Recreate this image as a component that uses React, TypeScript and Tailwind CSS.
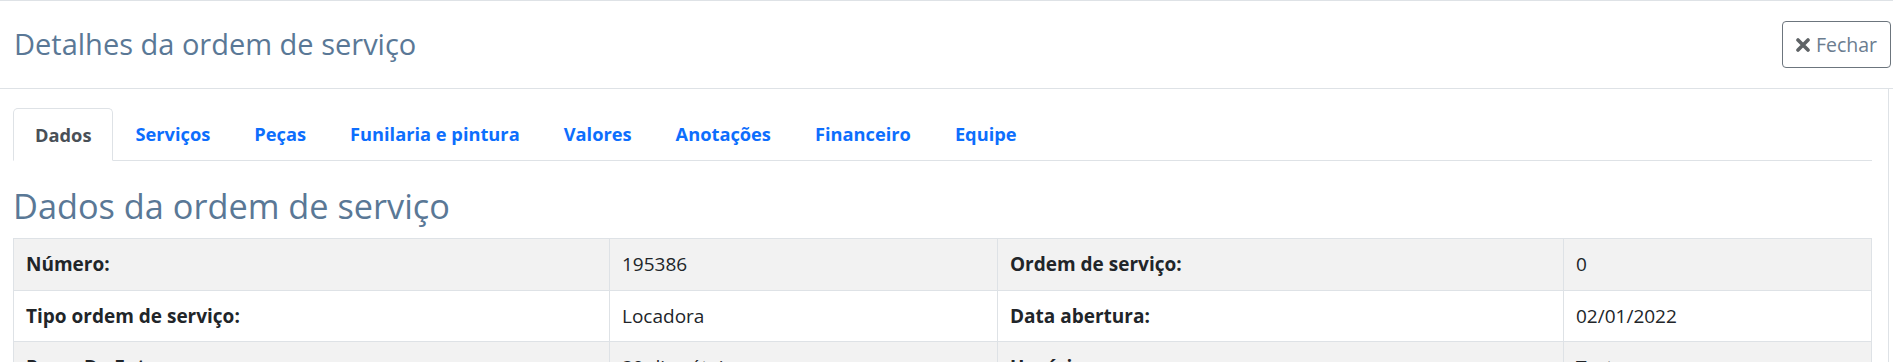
import React from "react";

const tabs = ["Dados", "Serviços", "Peças", "Funilaria e pintura", "Valores", "Anotações", "Financeiro", "Equipe"];

const rows: [string, string, string, string][] = [
  ["Número:", "195386", "Ordem de serviço:", "0"],
  ["Tipo ordem de serviço:", "Locadora", "Data abertura:", "02/01/2022"],
  ["Prazo De Entrega:", "30 dias úteis", "Usuário:", "Teste"],
];

const rowH = ["h-[52px]", "h-[51px]", "h-[51px]"];

export default function App() {
  return (
    <div
      className="w-[1893px] h-[362px] overflow-hidden bg-white border-t border-[#dee2e6] text-[#212529]"
      style={{ fontFamily: '"Open Sans", "Noto Sans", sans-serif' }}
    >
      <div className="h-[88px] flex items-center justify-between pl-[14px] pr-[2px] border-b border-[#dee2e6]">
        <h4 className="text-[29px] leading-[1.2] text-[#5a7896] font-normal">Detalhes da ordem de serviço</h4>
        <button className="h-[47px] w-[109px] flex items-center justify-center gap-[6px] border border-[#6c757d] rounded-[4px] text-[19.5px] text-[#6b7d8f]">
          <svg width="14" height="14" viewBox="0 0 14 14" className="mt-[1px]">
            <path d="M2 2 L12 12 M12 2 L2 12" stroke="#5f6366" strokeWidth="3.6" strokeLinecap="round" />
          </svg>
          <span>Fechar</span>
        </button>
      </div>
      <div className="mr-[4px] border-r border-[#dee2e6] h-[274px]">
        <div className="pl-[13px] pr-[16px] pt-[19px]">
          <div className="flex border-b border-[#dee2e6] h-[53px]">
            {tabs.map((t, i) => (
              <div
                key={t}
                className={
                  i === 0
                    ? "px-[21px] flex items-center text-[18.25px] font-bold text-[#495057] border border-[#dee2e6] border-b-white rounded-t-[5px] -mb-[1px] bg-white"
                    : "px-[21px] flex items-center text-[18.25px] font-bold text-[#0d6efd] border border-transparent"
                }
              >
                {t}
              </div>
            ))}
          </div>
          <h3 className="text-[34.3px] leading-[1.2] text-[#5a7896] font-normal mt-[24px] mb-[12px]">Dados da ordem de serviço</h3>
          <div className="grid grid-cols-[596px_388px_566px_308px] border-l border-t border-[#dee2e6] text-[19px]">
            {rows.map((r, ri) =>
              r.map((c, ci) => (
                <div
                  key={ri + "-" + ci}
                  className={
                    (ri % 2 === 0 ? "bg-[#f2f2f2] " : "bg-white ") +
                    rowH[ri] +
                    " flex items-center px-[12px] border-r border-b border-[#dee2e6] " +
                    (ci % 2 === 0 ? "font-bold" : "font-normal")
                  }
                >
                  {c}
                </div>
              ))
            )}
          </div>
        </div>
      </div>
    </div>
  );
}
